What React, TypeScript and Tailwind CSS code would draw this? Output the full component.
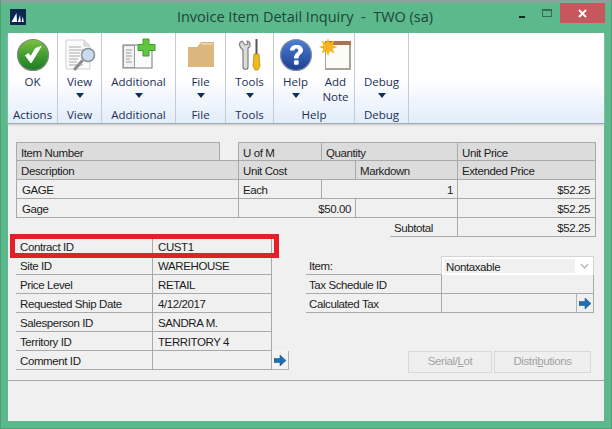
import type { ReactNode } from 'react';

// Ribbon icons
function OkIcon() {
  return (
    <svg width="34" height="34" viewBox="0 0 34 34">
      <defs>
        <linearGradient id="okFill" x1="0" y1="0" x2="0" y2="1">
          <stop offset="0" stopColor="#7cc242" />
          <stop offset="0.55" stopColor="#3f9a2e" />
          <stop offset="1" stopColor="#1f7a24" />
        </linearGradient>
      </defs>
      <circle cx="17" cy="17" r="15.5" fill="url(#okFill)" stroke="#7d8a80" strokeWidth="1.2" />
      <path d="M9.5 17.5 L15 25 L25 8.5 L19.5 10.5 L14.8 18.5 L12.5 15.5 Z" fill="#fff" stroke="#fff" strokeWidth="1" strokeLinejoin="round" />
    </svg>
  );
}

function ViewIcon() {
  return (
    <svg width="34" height="34" viewBox="0 0 34 34">
      <path d="M3 2 H21 L27 8 V31 H3 Z" fill="#fbfbfb" stroke="#cfcfcf" />
      <path d="M21 2 V8 H27 Z" fill="#e4e4e4" stroke="#cfcfcf" />
      <path d="M6 9 H18 M6 12 H20 M6 15 H17 M6 18 H17 M6 21 H15 M6 24 H14 M6 27 H20" stroke="#a9a9a9" strokeWidth="1" />
      <path d="M19 23 L12 31" stroke="#8b8b8b" strokeWidth="3" strokeLinecap="round" />
      <circle cx="25" cy="17" r="6.5" fill="#c9dcf2" stroke="#8a8f96" strokeWidth="1.5" />
    </svg>
  );
}

function AdditionalIcon() {
  return (
    <svg width="34" height="34" viewBox="0 0 34 34">
      <rect x="1" y="7" width="29" height="23" fill="#fafafa" stroke="#8f8f8f" strokeWidth="1.2" />
      <rect x="1.5" y="7.5" width="11" height="22" fill="#f2f2f2" stroke="#9a9a9a" />
      <path d="M4 12 H10 M4 15 H9 M4 18 H10 M4 21 H8 M4 24 H10" stroke="#9b9b9b" />
      <path d="M21 1 H27 V6.5 H33 V12.5 H27 V18 H21 V12.5 H16 V6.5 H21 Z" fill="#62c63f" stroke="#3d9d35" strokeWidth="1" strokeLinejoin="round" />
    </svg>
  );
}

function FolderIcon() {
  return (
    <svg width="34" height="34" viewBox="0 0 34 34">
      <path d="M4 9 L13 9 L17 4 H30 V29 H4 Z" fill="#dcb67f" />
      <path d="M17 6 H29" stroke="#f1e2c8" strokeWidth="1.2" />
    </svg>
  );
}

function ToolsIcon() {
  return (
    <svg width="34" height="34" viewBox="0 0 34 34">
      <path d="M9 3 L12 7 L15 6 L14 3 C18 3 18 9 15 10 V29 C15 32 10 32 10 29 V12 C6 9 5 5 9 3 Z" fill="#dcdcdc" stroke="#7f7f7f" strokeWidth="1.2" strokeLinejoin="round" />
      <rect x="22.5" y="1" width="2" height="15" fill="#555" />
      <path d="M21 16 H26 L27 28 L25 32 H22 L20 28 Z" fill="#f0b91f" stroke="#b98a12" strokeWidth="0.8" />
    </svg>
  );
}

function HelpIcon() {
  return (
    <svg width="34" height="34" viewBox="0 0 34 34">
      <defs>
        <linearGradient id="helpFill" x1="0" y1="0" x2="0" y2="1">
          <stop offset="0" stopColor="#4d7fd0" />
          <stop offset="1" stopColor="#1c3d94" />
        </linearGradient>
      </defs>
      <circle cx="17" cy="17" r="15.5" fill="url(#helpFill)" stroke="#8a93a5" strokeWidth="1.2" />
      <path d="M11 12.5 C11 8.5 14 7 17.5 7 C21.5 7 24 9 24 12.3 C24 16 19.5 16.5 19.5 20.5 H15 C15 15 19.3 15 19.3 12.6 C19.3 11.2 18.5 10.6 17.3 10.6 C16 10.6 15.4 11.4 15.4 12.5 Z" fill="#fff" />
      <rect x="15" y="22.3" width="4.6" height="4.4" rx="1" fill="#fff" />
    </svg>
  );
}

function NoteIcon() {
  return (
    <svg width="34" height="34" viewBox="0 0 34 34">
      <rect x="6" y="5" width="26" height="27" fill="#a9a39b" />
      <rect x="6" y="3" width="26" height="4" fill="#a9744b" />
      <rect x="7" y="7" width="23" height="23" fill="#fbfbf7" />
      <path d="M9 0 L10.8 5 L15.5 2.5 L13.5 7.5 L18.5 9 L13.5 10.8 L15.5 15.5 L10.8 13 L9 18 L7.2 13 L2.5 15.5 L4.5 10.8 L0 9 L4.5 7.5 L2.5 2.5 L7.2 5 Z" fill="#f7b21c" />
    </svg>
  );
}

function GroupArrow() {
  return (
    <svg width="8" height="5" viewBox="0 0 8 5" className="block">
      <path d="M0 0 H8 L4 5 Z" fill="#0f2f63" />
    </svg>
  );
}

function BlueArrow() {
  return (
    <svg width="12" height="11" viewBox="0 0 12 11" className="block">
      <path d="M0 3.5 H6 V0 L12 5.5 L6 11 V7.5 H0 Z" fill="#1f6fb5" stroke="#14477f" strokeWidth="0.5" />
    </svg>
  );
}

function RibbonGroup({ label, icon, width, arrow = true, caption }: {
  label: string;
  icon?: ReactNode;
  width: string;
  arrow?: boolean;
  caption: string[];
}) {
  return (
    <div className={`${width} h-full flex flex-col items-center border-r border-[#c3ccd6] shrink-0`}>
      <div className="h-[33px] mt-[5px] flex items-center justify-center">{icon}</div>
      <div className="mt-[3px] text-center leading-[15px] text-[#1b2f52]">
        {caption.map((line) => (
          <div key={line}>{line}</div>
        ))}
      </div>
      {arrow && <div className="mt-[4px]"><GroupArrow /></div>}
      <div className="mt-auto mb-[1px] leading-[15px] text-[#1b2f52]">{label}</div>
    </div>
  );
}

function Row({ children, className = '' }: { children: ReactNode; className?: string }) {
  return <div className={`flex h-[19px] ${className}`}>{children}</div>;
}

function Cell({ children, className = '', raised = false }: { children?: ReactNode; className?: string; raised?: boolean }) {
  return (
    <div className={`box-border h-full flex items-center border-r border-b border-[#a9a9a9] whitespace-nowrap ${raised ? 'pt-[3px]' : 'pt-[4px]'} ${className}`}>
      {children}
    </div>
  );
}

const DETAILS = [
  { label: 'Contract ID', value: 'CUST1' },
  { label: 'Site ID', value: 'WAREHOUSE' },
  { label: 'Price Level', value: 'RETAIL' },
  { label: 'Requested Ship Date', value: '4/12/2017' },
  { label: 'Salesperson ID', value: 'SANDRA M.' },
  { label: 'Territory ID', value: 'TERRITORY 4' },
  { label: 'Comment ID', value: '' },
];

export default function App() {
  return (
    <div className="w-[612px] h-[429px] box-border overflow-hidden bg-[#5bb98c] border-x border-b border-[#4f9f79] flex flex-col font-['Liberation_Sans',sans-serif] text-[11.5px] tracking-[-0.4px] text-[#1c1c1c]">
      {/* Title bar */}
      <div className="relative h-[33px] shrink-0 border-t-[3px] border-[#8aa39b] flex items-center justify-center pr-[2px] tracking-normal">
        <div className="absolute left-[9px] top-[6px]">
          <svg width="16" height="16" viewBox="0 0 16 16" className="block">
            <rect width="16" height="16" fill="#0d2850" />
            <path d="M1.5 13 L6.5 4 L7 13 Z M7.8 13 L10 6 L10.8 13 Z M11.6 13 L12.8 7.5 L13.8 13 Z" fill="#fff" />
          </svg>
        </div>
        <div className="font-['Open_Sans',sans-serif] text-[14.5px] text-[#1f4438] whitespace-pre -mt-[2px]">Invoice Item Detail Inquiry  -  TWO (sa)</div>
        <div className="absolute left-[518px] top-[13px] w-[6px] h-[2px] bg-[#10261e]" />
        <div className="absolute left-[541px] top-[6px] w-[10px] h-[8px] border border-[#3b6b57] border-t-2" />
        <div className="absolute left-[559px] top-0 w-[45px] h-[20px] bg-[#c9565c] flex items-center justify-center">
          <svg width="9" height="9" viewBox="0 0 9 9" className="block">
            <path d="M1 1 L8 8 M8 1 L1 8" stroke="#fff" strokeWidth="1.8" />
          </svg>
        </div>
      </div>

      <div className="mx-[7px] mb-[7px] flex-1 min-h-0 bg-[#f0f0f0] flex flex-col">
        {/* Ribbon */}
        <div className="h-[91px] shrink-0 flex bg-gradient-to-b from-white via-white to-[#e2edf9] border-b border-[#a3a9ae] shadow-[0_1px_2px_#c8c8c8] font-['Open_Sans',sans-serif] text-[11.5px] tracking-normal">
          <RibbonGroup width="w-[50px]" label="Actions" caption={['OK']} icon={<OkIcon />} arrow={false} />
          <RibbonGroup width="w-[44px]" label="View" caption={['View']} icon={<ViewIcon />} />
          <RibbonGroup width="w-[74px]" label="Additional" caption={['Additional']} icon={<AdditionalIcon />} />
          <RibbonGroup width="w-[50px]" label="File" caption={['File']} icon={<FolderIcon />} />
          <RibbonGroup width="w-[48px]" label="Tools" caption={['Tools']} icon={<ToolsIcon />} />
          <div className="w-[81px] h-full flex flex-col border-r border-[#c3ccd6] shrink-0 text-[#1b2f52]">
            <div className="flex flex-1">
              <div className="w-[43px] flex flex-col items-center">
                <div className="h-[33px] mt-[5px] flex items-center justify-center"><HelpIcon /></div>
                <div className="mt-[3px] leading-[15px]">Help</div>
                <div className="mt-[4px]"><GroupArrow /></div>
              </div>
              <div className="flex-1 flex flex-col items-center">
                <div className="h-[33px] mt-[5px] flex items-center justify-center"><NoteIcon /></div>
                <div className="mt-[3px] leading-[15px] text-center">Add<br />Note</div>
              </div>
            </div>
            <div className="mb-[1px] leading-[15px] text-center">Help</div>
          </div>
          <RibbonGroup width="w-[54px]" label="Debug" caption={['Debug']} />
        </div>

        {/* Item grid */}
        <div className="ml-[8px] mt-[18px] w-[580px] shrink-0">
          <Row>
            <Cell className="w-[204px] pl-[4px] bg-[#dcdcdc] border-t border-l">Item Number</Cell>
            <div className="w-[18px] border-b border-[#a9a9a9]" />
            <Cell className="w-[84px] pl-[4px] bg-[#dcdcdc] border-t border-l">U of M</Cell>
            <Cell className="w-[136px] pl-[4px] bg-[#dcdcdc] border-t">Quantity</Cell>
            <Cell className="w-[138px] pl-[4px] bg-[#dcdcdc] border-t">Unit Price</Cell>
          </Row>
          <Row>
            <Cell className="w-[222px] pl-[4px] bg-[#dcdcdc] border-l border-r-0">Description</Cell>
            <Cell className="w-[118px] pl-[4px] bg-[#dcdcdc] border-l">Unit Cost</Cell>
            <Cell className="w-[102px] pl-[4px] bg-[#dcdcdc]">Markdown</Cell>
            <Cell className="w-[138px] pl-[4px] bg-[#dcdcdc]">Extended Price</Cell>
          </Row>
          <Row>
            <Cell className="w-[222px] pl-[5px] border-l border-r-0">GAGE</Cell>
            <Cell className="w-[84px] pl-[4px] border-l">Each</Cell>
            <Cell className="w-[136px] justify-end pr-[4px]">1</Cell>
            <Cell className="w-[138px] justify-end pr-[5px]">$52.25</Cell>
          </Row>
          <Row>
            <Cell className="w-[222px] pl-[5px] border-l border-r-0">Gage</Cell>
            <Cell className="w-[118px] justify-end pr-[4px] border-l">$50.00</Cell>
            <Cell className="w-[102px]" />
            <Cell className="w-[138px] justify-end pr-[5px]">$52.25</Cell>
          </Row>
          <Row className="justify-end">
            <Cell className="w-[68px] pl-[4px]">Subtotal</Cell>
            <Cell raised className="w-[138px] justify-end pr-[5px]">$52.25</Cell>
          </Row>
        </div>

        {/* Lower fields */}
        <div className="h-[144px] shrink-0 box-border border-b border-[#a9a9a9] pl-[8px] flex">
          <div className="relative w-[273px] shrink-0">
            {DETAILS.map((row) => (
              <Row key={row.label}>
                <Cell className="w-[137px] pl-[4px]">{row.label}</Cell>
                <Cell raised className="w-[119px] pl-[5px]">{row.value}</Cell>
                {row.label === 'Comment ID' && (
                  <div className="box-border w-[17px] h-full flex items-center justify-center border-r border-b border-[#b4b4b4] bg-[#f4f4f4]">
                    <BlueArrow />
                  </div>
                )}
              </Row>
            ))}
            <div className="absolute -left-[6px] -top-[3px] w-[269px] h-[24px] box-border border-[5px] border-[#e3202a]" />
          </div>

          <div className="ml-[17px] mt-[19px] w-[288px] shrink-0">
            <Row>
              <div className="box-border w-[135px] h-full flex items-center pl-[3px] pt-[4px] border-b border-[#a9a9a9]">Item:</div>
              <div className="box-border w-[153px] h-full flex border-x border-t border-[#d4d4d4]">
                <div className="flex-1 flex items-center pl-[2px] pt-[4px] border-[#fff] border-2 border-r-0">Nontaxable</div>
                <div className="w-[18px] bg-white flex items-center justify-center">
                  <svg width="9" height="6" viewBox="0 0 9 6" className="block">
                    <path d="M1 1 L4.5 5 L8 1" fill="none" stroke="#b4b8bc" strokeWidth="1.4" />
                  </svg>
                </div>
              </div>
            </Row>
            <Row>
              <div className="box-border w-[135px] h-full flex items-center pl-[3px] pt-[4px] border-b border-[#a9a9a9]">Tax Schedule ID</div>
              <Cell className="w-[153px] border-l" />
            </Row>
            <Row>
              <div className="box-border w-[135px] h-full flex items-center pl-[3px] pt-[4px] border-b border-[#a9a9a9]">Calculated Tax</div>
              <div className="box-border w-[153px] h-full flex justify-end border-l border-r border-b border-[#a9a9a9]">
                <div className="box-border w-[17px] h-full flex items-center justify-center border-l border-[#b4b4b4]">
                  <BlueArrow />
                </div>
              </div>
            </Row>
            <div className="mt-[38px] ml-[102px] flex gap-[2px] text-[#a3a3a3]">
              <button className="box-border w-[84px] h-[22px] border border-[#d8d8d8] bg-[#efefef]">Serial/<span className="underline">L</span>ot</button>
              <button className="box-border w-[97px] h-[22px] border border-[#d8d8d8] bg-[#efefef]">Distri<span className="underline">b</span>utions</button>
            </div>
          </div>
        </div>
      </div>
    </div>
  );
}
